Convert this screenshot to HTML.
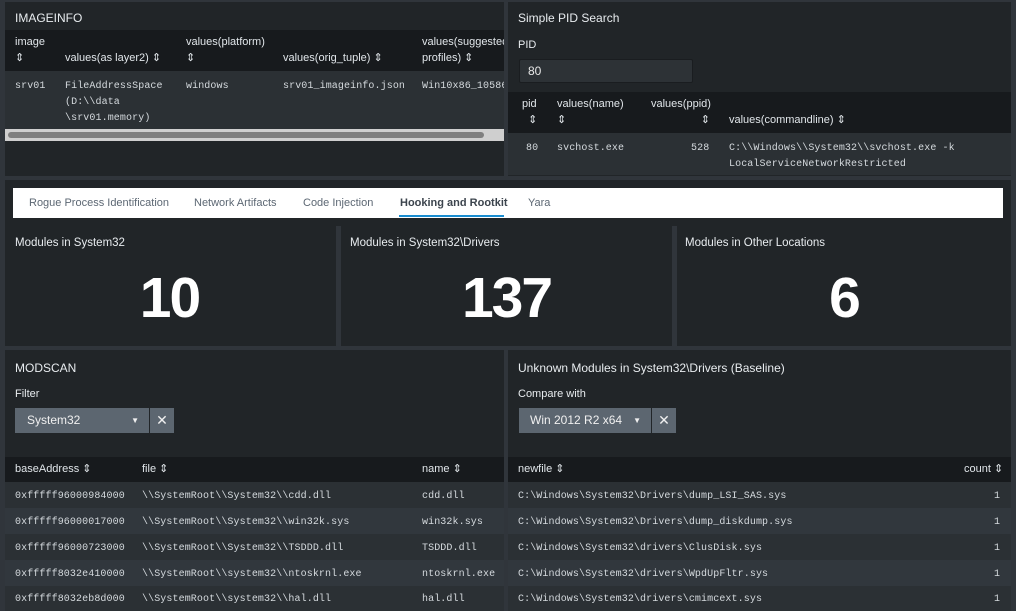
<!DOCTYPE html>
<html><head><style>
*{box-sizing:border-box;margin:0;padding:0}
body{width:1016px;height:611px;background:#30353b;font-family:"Liberation Sans",sans-serif;color:#e1e6ea;position:relative;overflow:hidden;font-size:12px}
.p{position:absolute;background:#212528}
.t{position:absolute;font-size:12px;color:#e8ecef}
.m{font-family:"Liberation Mono",monospace;font-size:10px;color:#d5dade;position:absolute;line-height:16px;margin-top:2px;letter-spacing:0.1px}
.h{font-size:11px;color:#e1e6ea;position:absolute;line-height:16px;margin-top:1px}
.thead{position:absolute;background:#171a1d}
.r1{position:absolute;background:#2b3034}
.r2{position:absolute;background:#31373d}
.sel{position:absolute;background:#5c6670;height:25px;color:#f0f0f0;font-size:12px;line-height:25px}
.big{position:absolute;font-size:57px;font-weight:bold;color:#fff;text-align:center;letter-spacing:-2px}
</style></head><body>
<div class="p" style="left:5px;top:2px;width:499px;height:174px"></div>
<div class="t" style="left:15px;top:11px;font-size:12px">IMAGEINFO</div>
<div class="thead" style="left:5px;top:30px;width:499px;height:41px"></div>
<div class="h" style="left:15px;top:33px">image<br>⇕</div>
<div class="h" style="left:65px;top:49px">values(as layer2) ⇕</div>
<div class="h" style="left:186px;top:33px">values(platform)<br>⇕</div>
<div class="h" style="left:283px;top:49px">values(orig_tuple) ⇕</div>
<div class="h" style="left:422px;top:33px;width:82px;overflow:hidden;white-space:nowrap">values(suggested<br>profiles) ⇕</div>
<div class="r1" style="left:5px;top:71px;width:499px;height:58px"></div>
<div class="m" style="left:15px;top:77px">srv01</div>
<div class="m" style="left:65px;top:77px">FileAddressSpace<br>(D:\\data<br>\srv01.memory)</div>
<div class="m" style="left:186px;top:77px">windows</div>
<div class="m" style="left:283px;top:77px">srv01_imageinfo.json</div>
<div class="m" style="left:422px;top:77px;width:82px;overflow:hidden;white-space:nowrap">Win10x86_10586</div>
<div style="position:absolute;left:5px;top:129px;width:499px;height:12px;background:#cfcfcf"></div>
<div style="position:absolute;left:8px;top:132px;width:476px;height:6px;background:#7f7f7f;border-radius:3px"></div>
<div class="p" style="left:508px;top:2px;width:503px;height:174px"></div>
<div class="t" style="left:518px;top:11px">Simple PID Search</div>
<div class="t" style="left:518px;top:39px;font-size:11px">PID</div>
<div style="position:absolute;left:519px;top:59px;width:174px;height:24px;background:#2d3236;border:1px solid #1a1d20;border-radius:2px;font-size:12px;line-height:22px;padding-left:8px;color:#e8e8e8">80</div>
<div class="thead" style="left:508px;top:92px;width:503px;height:41px"></div>
<div class="h" style="left:522px;top:95px">pid<br>&nbsp;&nbsp;⇕</div>
<div class="h" style="left:557px;top:95px">values(name)<br>⇕</div>
<div class="h" style="left:651px;top:95px;text-align:right;width:59px">values(ppid)<br>⇕</div>
<div class="h" style="left:729px;top:111px">values(commandline) ⇕</div>
<div class="r1" style="left:508px;top:133px;width:503px;height:42px"></div>
<div class="m" style="left:526px;top:139px">80</div>
<div class="m" style="left:557px;top:139px">svchost.exe</div>
<div class="m" style="left:691px;top:139px">528</div>
<div class="m" style="left:729px;top:139px">C:\\Windows\\System32\\svchost.exe -k<br>LocalServiceNetworkRestricted</div>
<div style="position:absolute;left:5px;top:180px;width:1006px;height:166px;background:#212528"></div>
<div style="position:absolute;left:13px;top:188px;width:990px;height:30px;background:#fff"></div>
<div style="position:absolute;top:197px;left:29px;font-size:11px;color:#5c6773">Rogue Process Identification</div>
<div style="position:absolute;top:197px;left:194px;font-size:11px;color:#5c6773">Network Artifacts</div>
<div style="position:absolute;top:197px;left:303px;font-size:11px;color:#5c6773">Code Injection</div>
<div style="position:absolute;top:197px;left:400px;font-size:11px;color:#3c444d;font-weight:bold">Hooking and Rootkit</div>
<div style="position:absolute;top:215px;left:399px;width:105px;height:2px;background:#1a8dd0"></div>
<div style="position:absolute;top:197px;left:528px;font-size:11px;color:#5c6773">Yara</div>
<div style="position:absolute;left:5px;top:226px;width:1006px;height:120px;background:#30353b"></div>
<div class="p" style="left:5px;top:226px;width:331px;height:120px"></div>
<div class="p" style="left:341px;top:226px;width:331px;height:120px"></div>
<div class="p" style="left:677px;top:226px;width:334px;height:120px"></div>
<div class="t" style="left:15px;top:237px;font-size:11.5px">Modules in System32</div>
<div class="t" style="left:350px;top:237px;font-size:11.5px">Modules in System32\Drivers</div>
<div class="t" style="left:685px;top:237px;font-size:11.5px">Modules in Other Locations</div>
<div class="big" style="left:4px;top:265px;width:331px">10</div>
<div class="big" style="left:341px;top:265px;width:331px">137</div>
<div class="big" style="left:677px;top:265px;width:334px">6</div>
<div class="p" style="left:5px;top:350px;width:499px;height:261px"></div>
<div class="t" style="left:15px;top:361px">MODSCAN</div>
<div class="t" style="left:15px;top:388px;font-size:11px">Filter</div>
<div class="sel" style="left:15px;top:408px;width:134px;padding-left:12px">System32<span style="position:absolute;right:10px;font-size:8px">▼</span></div>
<div class="sel" style="left:150px;top:408px;width:24px;text-align:center;font-size:14px">✕</div>
<div class="thead" style="left:5px;top:457px;width:499px;height:25px"></div>
<div class="h" style="left:15px;top:460px">baseAddress ⇕</div>
<div class="h" style="left:142px;top:460px">file ⇕</div>
<div class="h" style="left:422px;top:460px">name ⇕</div>
<div class="r1" style="left:5px;top:482px;width:499px;height:26px"></div>
<div class="r2" style="left:5px;top:508px;width:499px;height:26px"></div>
<div class="r1" style="left:5px;top:534px;width:499px;height:26px"></div>
<div class="r2" style="left:5px;top:560px;width:499px;height:26px"></div>
<div class="r1" style="left:5px;top:586px;width:499px;height:25px"></div>
<div class="m" style="left:15px;top:487px">0xfffff96000984000</div><div class="m" style="left:142px;top:487px">\\SystemRoot\\System32\\cdd.dll</div><div class="m" style="left:422px;top:487px">cdd.dll</div>
<div class="m" style="left:15px;top:513px">0xfffff96000017000</div><div class="m" style="left:142px;top:513px">\\SystemRoot\\System32\\win32k.sys</div><div class="m" style="left:422px;top:513px">win32k.sys</div>
<div class="m" style="left:15px;top:539px">0xfffff96000723000</div><div class="m" style="left:142px;top:539px">\\SystemRoot\\System32\\TSDDD.dll</div><div class="m" style="left:422px;top:539px">TSDDD.dll</div>
<div class="m" style="left:15px;top:565px">0xfffff8032e410000</div><div class="m" style="left:142px;top:565px">\\SystemRoot\\system32\\ntoskrnl.exe</div><div class="m" style="left:422px;top:565px">ntoskrnl.exe</div>
<div class="m" style="left:15px;top:590px">0xfffff8032eb8d000</div><div class="m" style="left:142px;top:590px">\\SystemRoot\\system32\\hal.dll</div><div class="m" style="left:422px;top:590px">hal.dll</div>
<div class="p" style="left:508px;top:350px;width:503px;height:261px"></div>
<div class="t" style="left:518px;top:361px">Unknown Modules in System32\Drivers (Baseline)</div>
<div class="t" style="left:518px;top:388px;font-size:11px">Compare with</div>
<div class="sel" style="left:519px;top:408px;width:132px;padding-left:11px">Win 2012 R2 x64<span style="position:absolute;right:10px;font-size:8px">▼</span></div>
<div class="sel" style="left:652px;top:408px;width:24px;text-align:center;font-size:14px">✕</div>
<div class="thead" style="left:508px;top:457px;width:503px;height:25px"></div>
<div class="h" style="left:518px;top:460px">newfile ⇕</div>
<div class="h" style="left:964px;top:460px">count ⇕</div>
<div class="r1" style="left:508px;top:482px;width:503px;height:26px"></div>
<div class="r2" style="left:508px;top:508px;width:503px;height:26px"></div>
<div class="r1" style="left:508px;top:534px;width:503px;height:26px"></div>
<div class="r2" style="left:508px;top:560px;width:503px;height:26px"></div>
<div class="r1" style="left:508px;top:586px;width:503px;height:25px"></div>
<div class="m" style="left:518px;top:487px">C:\Windows\System32\Drivers\dump_LSI_SAS.sys</div><div class="m" style="left:994px;top:487px">1</div>
<div class="m" style="left:518px;top:513px">C:\Windows\System32\Drivers\dump_diskdump.sys</div><div class="m" style="left:994px;top:513px">1</div>
<div class="m" style="left:518px;top:539px">C:\Windows\System32\drivers\ClusDisk.sys</div><div class="m" style="left:994px;top:539px">1</div>
<div class="m" style="left:518px;top:565px">C:\Windows\System32\drivers\WpdUpFltr.sys</div><div class="m" style="left:994px;top:565px">1</div>
<div class="m" style="left:518px;top:590px">C:\Windows\System32\drivers\cmimcext.sys</div><div class="m" style="left:994px;top:590px">1</div>
</body></html>
